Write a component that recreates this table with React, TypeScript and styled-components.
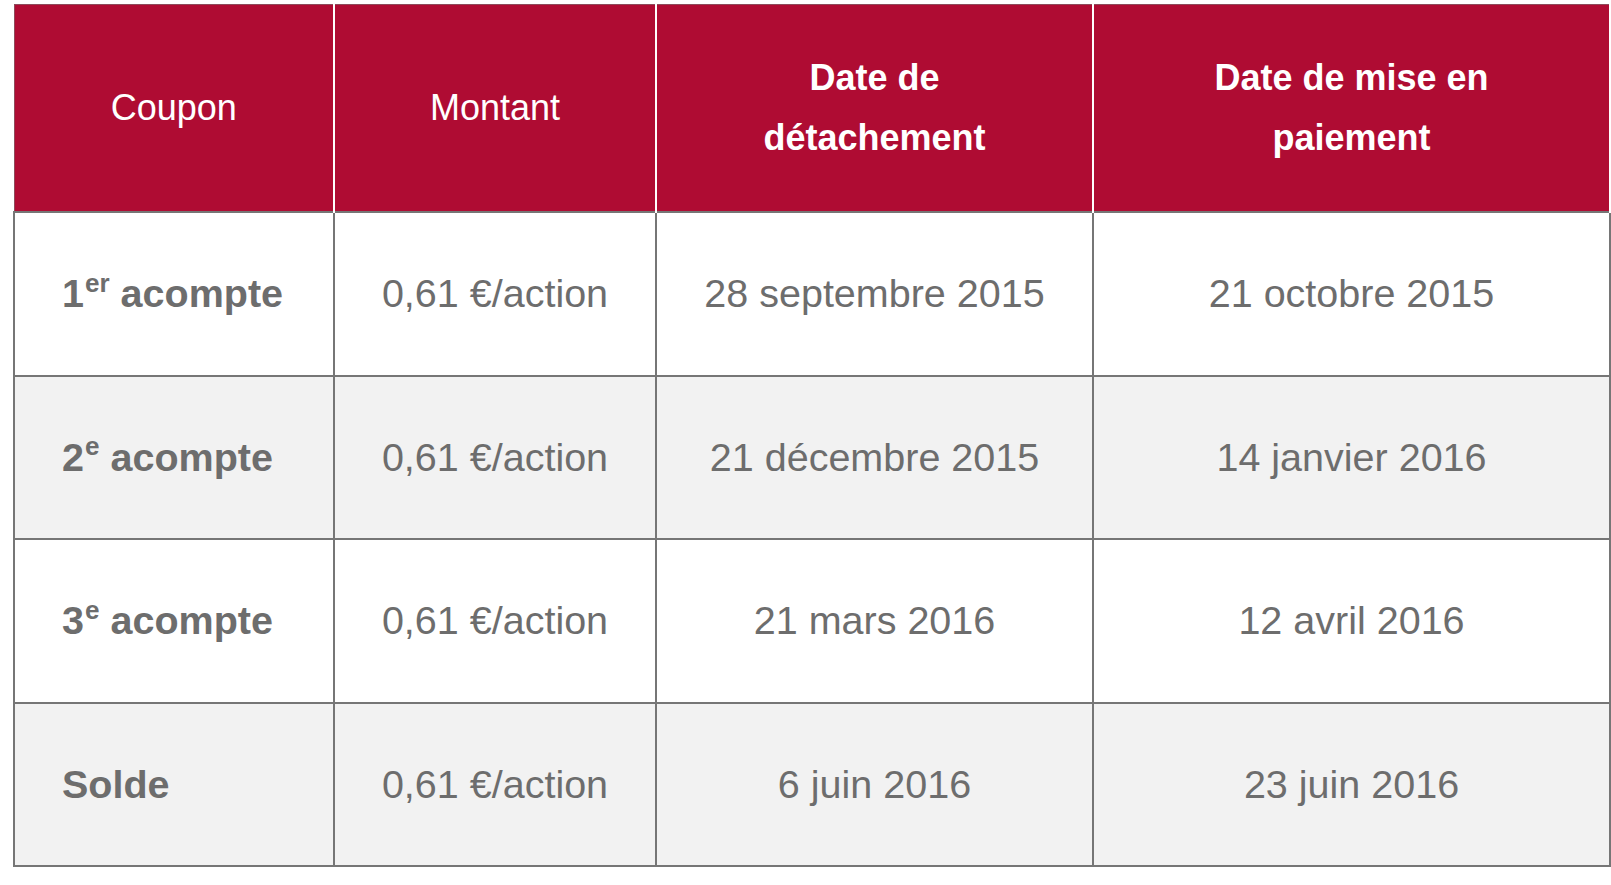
import styled, { createGlobalStyle } from 'styled-components';

const GlobalStyle = createGlobalStyle`
  html, body {
    margin: 0;
    padding: 0;
    background: #ffffff;
  }
  body {
    font-family: 'Liberation Sans', Arial, sans-serif;
  }
`;

const Page = styled.div`
  padding: 4px 0 0 13px;
  width: 1611px;
  box-sizing: border-box;
  overflow: hidden;
`;

const Table = styled.table`
  border-collapse: collapse;
  width: 1598px;
  table-layout: fixed;
  font-family: 'Liberation Sans', Arial, sans-serif;
`;

const HeadCell = styled.th<{ bold?: boolean }>`
  height: 206px;
  padding: 0 20px;
  background: #af0c33;
  color: #ffffff;
  font-size: 36px;
  line-height: 60px;
  font-weight: ${({ bold }) => (bold ? 700 : 400)};
  text-align: center;
  vertical-align: middle;
  border: 2px solid #ffffff;
  border-top: 1px solid #8e4a5a;
  border-bottom: none;

  &:first-child {
    border-left: 1px solid #8e4a5a;
  }
`;

const Row = styled.tr<{ shaded: boolean }>`
  background: ${({ shaded }) => (shaded ? '#f2f2f2' : '#ffffff')};
`;

const Cell = styled.td<{ label?: boolean }>`
  height: 161.5px;
  padding: 0 ${({ label }) => (label ? '47px' : '10px')};
  border: 2px solid #767676;
  color: #6d6d6d;
  font-size: 39.5px;
  font-weight: ${({ label }) => (label ? 700 : 400)};
  text-align: ${({ label }) => (label ? 'left' : 'center')};
  vertical-align: middle;
  white-space: nowrap;
`;

const Sup = styled.sup`
  font-size: 0.66em;
  line-height: 0;
  vertical-align: 0.6em;
  margin-left: 1px;
`;

type Coupon = {
  num?: string;
  sup?: string;
  label: string;
  amount: string;
  detach: string;
  payment: string;
};

const coupons: Coupon[] = [
  { num: '1', sup: 'er', label: 'acompte', amount: '0,61 €/action', detach: '28 septembre 2015', payment: '21 octobre 2015' },
  { num: '2', sup: 'e', label: 'acompte', amount: '0,61 €/action', detach: '21 décembre 2015', payment: '14 janvier 2016' },
  { num: '3', sup: 'e', label: 'acompte', amount: '0,61 €/action', detach: '21 mars 2016', payment: '12 avril 2016' },
  { label: 'Solde', amount: '0,61 €/action', detach: '6 juin 2016', payment: '23 juin 2016' },
];

export default function App() {
  return (
    <Page>
      <GlobalStyle />
      <Table>
        <colgroup>
          <col style={{ width: 320 }} />
          <col style={{ width: 322 }} />
          <col style={{ width: 437 }} />
          <col />
        </colgroup>
        <thead>
          <tr>
            <HeadCell>Coupon</HeadCell>
            <HeadCell>Montant</HeadCell>
            <HeadCell bold>
              Date de
              <br />
              détachement
            </HeadCell>
            <HeadCell bold>
              Date de mise en
              <br />
              paiement
            </HeadCell>
          </tr>
        </thead>
        <tbody>
          {coupons.map((c, i) => (
            <Row key={i} shaded={i % 2 === 1}>
              <Cell label>
                {c.num && (
                  <>
                    {c.num}
                    <Sup>{c.sup}</Sup>{' '}
                  </>
                )}
                {c.label}
              </Cell>
              <Cell>{c.amount}</Cell>
              <Cell>{c.detach}</Cell>
              <Cell>{c.payment}</Cell>
            </Row>
          ))}
        </tbody>
      </Table>
    </Page>
  );
}
